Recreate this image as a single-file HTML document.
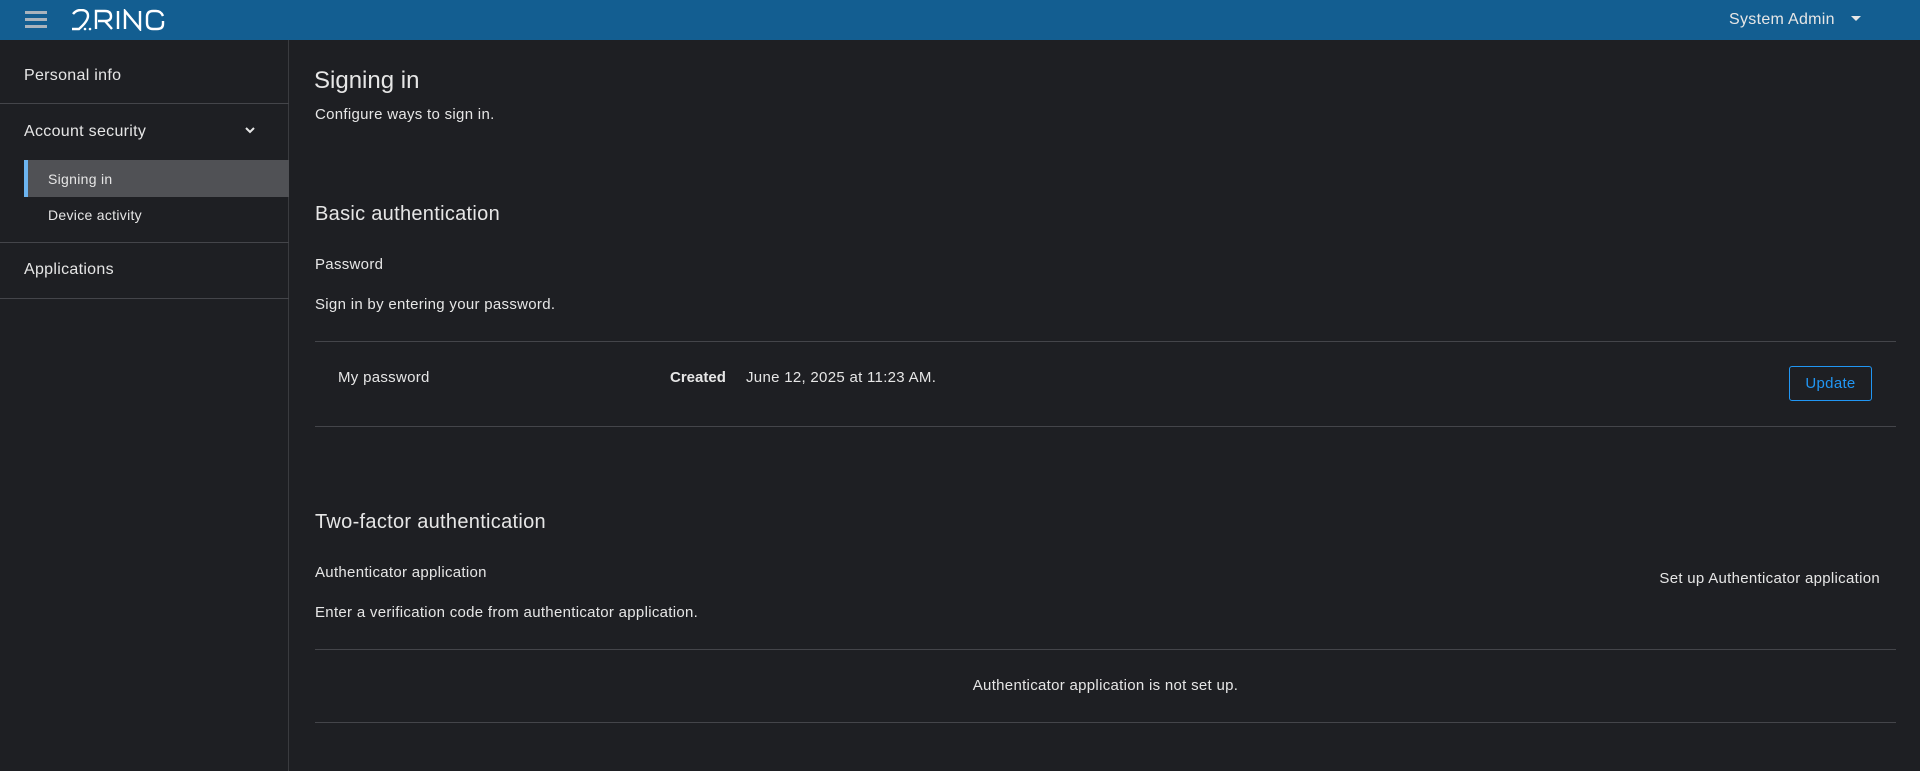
<!DOCTYPE html>
<html><head><meta charset="utf-8"><style>
*{margin:0;padding:0;box-sizing:border-box}
body{width:1920px;height:771px;background:#1e1f23;color:#e6e6e6;font-family:"Liberation Sans",sans-serif;position:relative;overflow:hidden}
.a{position:absolute;white-space:nowrap}
.f{letter-spacing:0.3px}
.hdr{position:absolute;left:0;top:0;width:1920px;height:40px;background:#135e91}
.side{position:absolute;left:0;top:40px;width:289px;height:731px;border-right:1px solid #3a3b3f}
.line{position:absolute;left:315px;width:1581px;height:1px;background:#44454a}
.sl{position:absolute;left:0;width:289px;height:1px;background:#44454a}
</style></head><body>
<div class="hdr">
 <div class="a" style="left:25px;top:11px;width:22px;height:3px;background:#a9b3bc"></div>
 <div class="a" style="left:25px;top:18px;width:22px;height:3px;background:#a9b3bc"></div>
 <div class="a" style="left:25px;top:25px;width:22px;height:3px;background:#a9b3bc"></div>
 <svg class="a" style="left:71px;top:9px" width="94" height="22" viewBox="0 0 94 22" fill="none" stroke="#fff" stroke-width="2.4">
  <path d="M2 5 Q5 1 10 1 Q17 1 17 7 Q17 12 8 20 H1"/>
  <circle cx="14" cy="20" r="1.3" fill="#fff" stroke="none"/><circle cx="19" cy="20" r="1.3" fill="#fff" stroke="none"/>
  <path d="M25 20 V2 H34 Q40 2 40 7.5 Q40 12 34 12 H27 M34 12 L41 20"/>
  <path d="M47 2 V20"/>
  <path d="M54 20 V2 L69 20 V2"/>
  <path d="M92 7 Q90 2 85 2 H82 Q76 2 76 8 V14 Q76 20 82 20 H86 Q92 20 92 15 V12"/>
 </svg>
 <div class="a f" style="left:1729px;top:11px;font-size:16px;color:#e6e6e6">System Admin</div>
 <div class="a" style="left:1851px;top:16px;width:0;height:0;border-left:5px solid transparent;border-right:5px solid transparent;border-top:5px solid #e6e6e6"></div>
</div>
<div class="side">
 <div class="a f" style="left:24px;top:27px;font-size:16px">Personal info</div>
 <div class="sl" style="top:63px"></div>
 <div class="a f" style="left:24px;top:83px;font-size:16px">Account security</div>
 <svg class="a" style="left:244px;top:85px" width="12" height="10" viewBox="0 0 12 10"><path d="M2 3 L6 7 L10 3" stroke="#e6e6e6" stroke-width="2" fill="none"/></svg>
 <div class="a" style="left:24px;top:120px;width:265px;height:37px;background:#505155"></div>
 <div class="a" style="left:24px;top:120px;width:4px;height:37px;background:#6cb4f0"></div>
 <div class="a f" style="left:48px;top:131px;font-size:14px">Signing in</div>
 <div class="a f" style="left:48px;top:167px;font-size:14px">Device activity</div>
 <div class="sl" style="top:202px"></div>
 <div class="a f" style="left:24px;top:221px;font-size:16px">Applications</div>
 <div class="sl" style="top:258px"></div>
</div>
<div class="a" style="left:314px;top:67px;font-size:24px">Signing in</div>
<div class="a f" style="left:315px;top:106px;font-size:15px">Configure ways to sign in.</div>
<div class="a f" style="left:315px;top:203px;font-size:20px">Basic authentication</div>
<div class="a f" style="left:315px;top:256px;font-size:15px">Password</div>
<div class="a f" style="left:315px;top:296px;font-size:15px">Sign in by entering your password.</div>
<div class="line" style="top:341px"></div>
<div class="a f" style="left:338px;top:369px;font-size:15px">My password</div>
<div class="a" style="left:670px;top:369px;font-size:15px;font-weight:bold">Created</div>
<div class="a f" style="left:746px;top:369px;font-size:15px">June 12, 2025 at 11:23 AM.</div>
<div class="a f" style="left:1789px;top:366px;width:83px;height:35px;border:1px solid #2196f3;border-radius:3px;color:#2196f3;font-size:15px;text-align:center;line-height:33px">Update</div>
<div class="line" style="top:426px"></div>
<div class="a f" style="left:315px;top:511px;font-size:20px">Two-factor authentication</div>
<div class="a f" style="left:315px;top:564px;font-size:15px">Authenticator application</div>
<div class="a f" style="right:40px;top:570px;font-size:15px">Set up Authenticator application</div>
<div class="a f" style="left:315px;top:604px;font-size:15px">Enter a verification code from authenticator application.</div>
<div class="line" style="top:649px"></div>
<div class="a f" style="left:315px;width:1581px;text-align:center;top:677px;font-size:15px">Authenticator application is not set up.</div>
<div class="line" style="top:722px"></div>
</body></html>
